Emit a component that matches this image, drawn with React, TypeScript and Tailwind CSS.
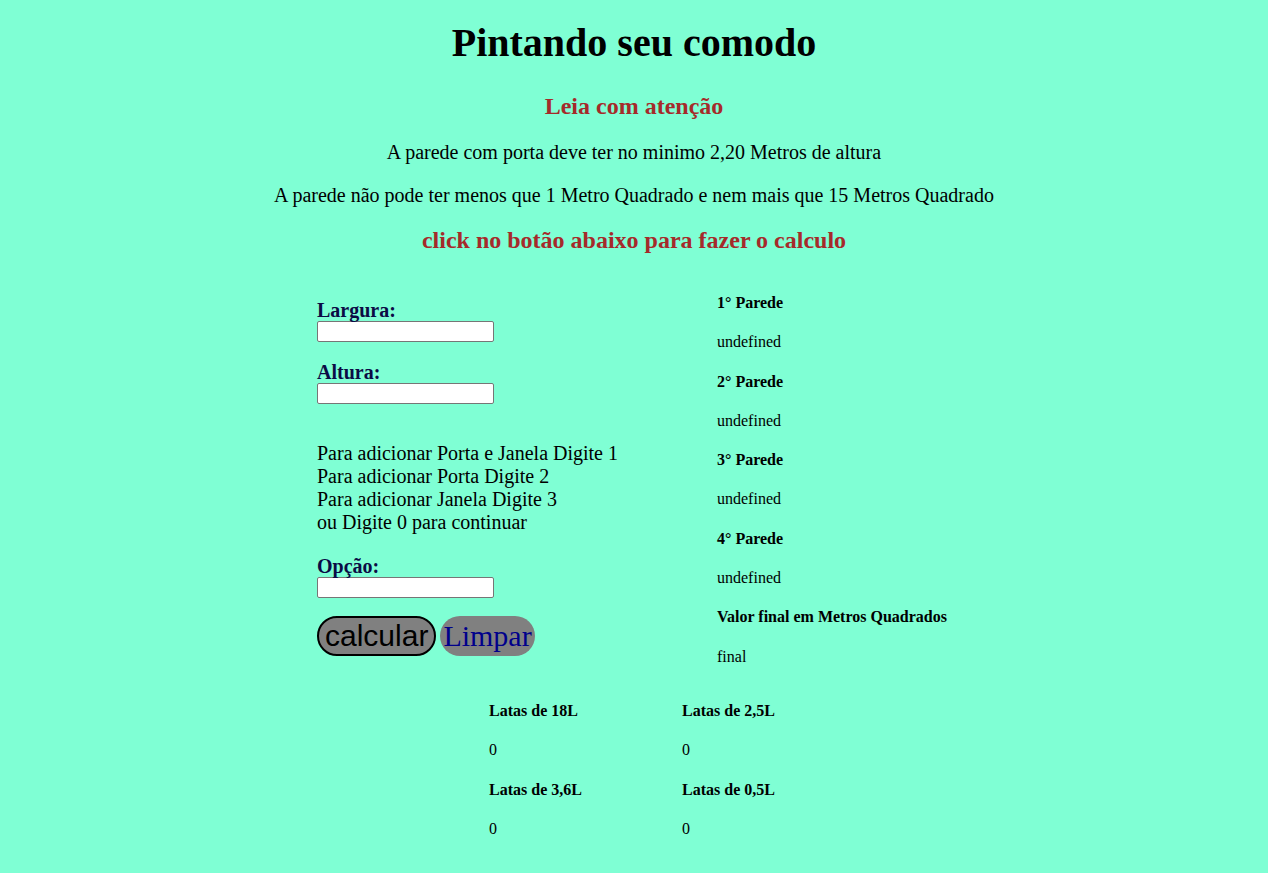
const serif = { fontFamily: '"Liberation Serif", "Times New Roman", serif' }

function Field({ label, className = '' }: { label: string; className?: string }) {
  return (
    <div className={className}>
      <label className="block text-[20px] font-bold leading-[22px] text-[#0b0b45]">{label}</label>
      <input type="text" className="block w-[177px] h-[21px] bg-white border border-[#767676] rounded-[2px]" />
    </div>
  )
}

const walls = ['1° Parede', '2° Parede', '3° Parede', '4° Parede']

const cans = [
  { label: 'Latas de 18L', value: '0' },
  { label: 'Latas de 2,5L', value: '0' },
  { label: 'Latas de 3,6L', value: '0' },
  { label: 'Latas de 0,5L', value: '0' },
]

export default function App() {
  return (
    <div className="min-h-[873px] bg-[#7fffd4] text-black pb-[26px]" style={serif}>
      {/* Header */}
      <div className="text-center">
        <h1 className="pt-[20px] text-[40px] font-bold leading-[46px]">Pintando seu comodo</h1>
        <h2 className="mt-[25px] text-[24px] font-bold leading-[30px] text-[#a52a2a]">Leia com atenção</h2>
        <p className="mt-[18px] text-[20px] leading-[26px]">A parede com porta deve ter no minimo 2,20 Metros de altura</p>
        <p className="mt-[17px] text-[20px] leading-[26px]">
          A parede não pode ter menos que 1 Metro Quadrado e nem mais que 15 Metros Quadrado
        </p>
        <h2 className="mt-[17px] text-[24px] font-bold leading-[30px] text-[#a52a2a]">
          click no botão abaixo para fazer o calculo
        </h2>
      </div>

      {/* Form + results */}
      <div className="mt-[28px] mx-auto w-[634px] grid grid-cols-[400px_1fr]">
        <div className="pt-[16px]">
          <Field label="Largura:" />
          <Field label="Altura:" className="mt-[19px]" />
          <div className="mt-[38px] text-[20px] leading-[23px]">
            <div>Para adicionar Porta e Janela Digite 1</div>
            <div>Para adicionar Porta Digite 2</div>
            <div>Para adicionar Janela Digite 3</div>
            <div>ou Digite 0 para continuar</div>
          </div>
          <Field label="Opção:" className="mt-[21px]" />
          <div className="mt-[18px] flex gap-[4px]">
            <button
              className="h-[40px] px-[6px] rounded-full bg-[#808080] border-2 border-black text-[30px] leading-none text-black"
              style={{ fontFamily: '"Liberation Sans", Arial, sans-serif' }}
            >
              calcular
            </button>
            <button className="h-[40px] px-[3px] rounded-full bg-[#808080] text-[30px] leading-none text-[#00008b]">
              Limpar
            </button>
          </div>
        </div>

        <div className="text-[16px] leading-[39.3px]">
          {walls.map(w => (
            <div key={w}>
              <div className="font-bold">{w}</div>
              <div>undefined</div>
            </div>
          ))}
          <div className="font-bold">Valor final em Metros Quadrados</div>
          <div>final</div>
        </div>
      </div>

      {/* Paint cans */}
      <div className="mt-[15px] mx-auto w-[290px] grid grid-cols-[193px_1fr] text-[16px] leading-[39.3px]">
        {cans.map(c => (
          <div key={c.label}>
            <div className="font-bold">{c.label}</div>
            <div>{c.value}</div>
          </div>
        ))}
      </div>
    </div>
  )
}
